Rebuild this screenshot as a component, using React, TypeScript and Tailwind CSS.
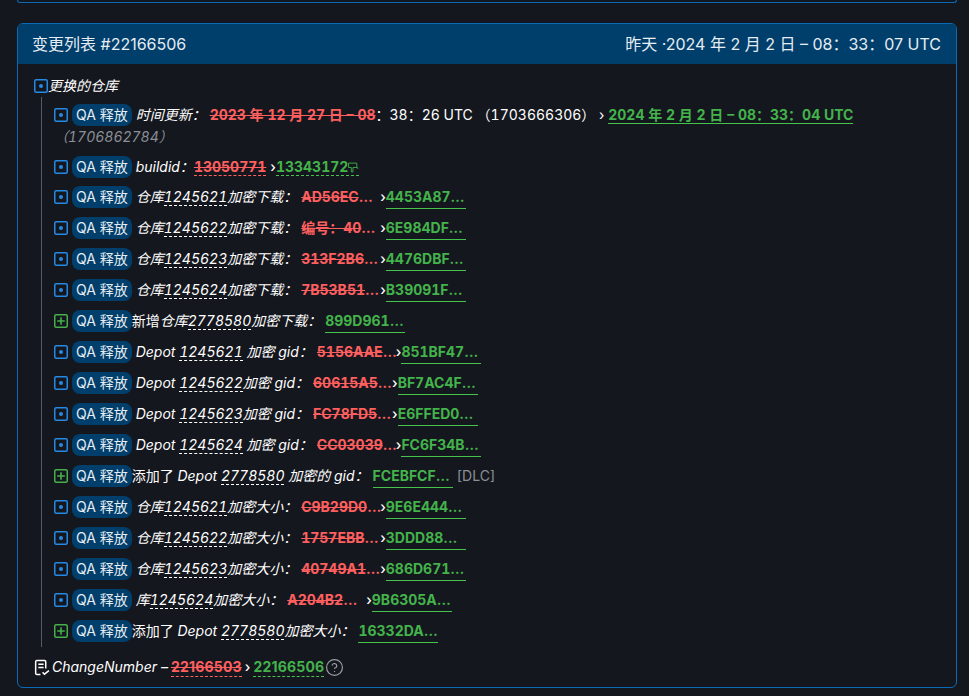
import React from 'react';
import { CircleHelp } from 'lucide-react';

const ChangedIcon = () => (
  <svg viewBox="0 0 14 14" className="inline-block w-[14px] h-[14px] align-[-2px]">
    <rect x="0.75" y="0.75" width="12.5" height="12.5" rx="1.5" fill="none" stroke="#2589e6" strokeWidth="1.5" />
    <circle cx="7" cy="7" r="2" fill="#2589e6" />
  </svg>
);

const AddedIcon = () => (
  <svg viewBox="0 0 14 14" className="inline-block w-[14px] h-[14px] align-[-2px]">
    <rect x="0.75" y="0.75" width="12.5" height="12.5" rx="1.5" fill="none" stroke="#46b04a" strokeWidth="1.5" />
    <path d="M7 3.2v7.6M3.2 7h7.6" fill="none" stroke="#46b04a" strokeWidth="1.6" />
  </svg>
);

const Badge = () => (
  <span className="inline-block h-[22px] px-[4px] ml-[4px] rounded-lg bg-[#003e6b] text-[#e6edf3] align-top">QA 释放</span>
);

const Id = ({ children }: { children: React.ReactNode }) => (
  <span className="border-b border-dashed border-white">{children}</span>
);

const OldCut = ({ children }: { children: React.ReactNode }) => (
  <span className="inline-block w-[81px] -mr-[2px] ml-[4px] h-[23px] align-top truncate font-bold line-through text-[#ff5f5f]">{children}</span>
);

const NewCut = ({ children }: { children: React.ReactNode }) => (
  <span className="inline-block w-20 h-[23px] align-top truncate font-bold text-[#43b34b] border-b border-[#46c34a]">{children}</span>
);

type Item = { added?: boolean; label: React.ReactNode; from?: string; to: string; extra?: string };

const Row = ({ added, label, from, to, extra }: Item) => (
  <div className="mb-2 last:mb-0 leading-[22px]">
    {added ? <AddedIcon /> : <ChangedIcon />}
    <Badge />
    {label}
    {from ? <OldCut>{from}</OldCut> : <span className="inline-block w-1" />}
    {from && <span className="font-medium">›</span>}
    <NewCut>{to}</NewCut>
    {extra && <span className="ml-[4px] text-[#8b8f96]">{extra}</span>}
  </div>
);

const download = (id: string) => (
  <i className="ml-[4px]">仓库<Id>{id}</Id>加密下载：</i>
);
const size = (id: string) => (
  <i className="ml-[4px]">仓库<Id>{id}</Id>加密大小：</i>
);

const items: Item[] = [
  { label: download('1245621'), from: 'AD56EC编号', to: '4453A87C1E20' },
  { label: download('1245622'), from: '编号：40A1C29', to: '6E984DF02B7C' },
  { label: download('1245623'), from: '313F2B6D90E4', to: '4476DBF1A3C8' },
  { label: download('1245624'), from: '7B53B51C07FA', to: 'B39091F6D2E4' },
  {
    added: true,
    label: <span>新增<i>仓库<Id>2778580</Id>加密下载：</i></span>,
    to: '899D961E40AB',
  },
  { label: <i className="ml-[4px]">Depot <Id>1245621</Id> 加密 gid：</i>, from: '5156AAE07C31', to: '851BF47A09D2' },
  { label: <i className="ml-[4px]">Depot <Id>1245622</Id>加密 gid：</i>, from: '60615A5F2E08', to: 'BF7AC4F31D96' },
  { label: <i className="ml-[4px]">Depot <Id>1245623</Id>加密 gid：</i>, from: 'FC78FD5A10B3', to: 'E6FFED0C82A1' },
  { label: <i className="ml-[4px]">Depot <Id>1245624</Id> 加密 gid：</i>, from: 'CC03039E71D5', to: 'FC6F34B9A0C2' },
  {
    added: true,
    label: <span>添加了 <i>Depot <Id>2778580</Id> 加密的 gid：</i></span>,
    to: 'FCEBFCF7163A',
    extra: '[DLC]',
  },
  { label: size('1245621'), from: 'C9B29D07A4E1', to: '9E6E4441BC07' },
  { label: size('1245622'), from: '1757EBB9C203', to: '3DDD88编号' },
  { label: size('1245623'), from: '40749A1D6F5C', to: '686D6712E09B' },
  { label: <i className="ml-[4px]">库<Id>1245624</Id>加密大小：</i>, from: 'A204B2编号', to: '9B6305A1F7D4' },
  {
    added: true,
    label: <span>添加了 <i>Depot <Id>2778580</Id>加密大小：</i></span>,
    to: '16332DA09E7B',
  },
];

export default function App() {
  return (
    <div
      className="min-h-screen bg-[#15171e] pl-[17px] pr-[12px] text-[14px] text-white overflow-hidden"
      style={{ fontFamily: 'Inter, "Noto Sans CJK SC", sans-serif' }}
    >
      <div className="h-[3px] rounded-b-md border-x border-b border-[#0a6ab5]" />

      <div className="mt-5 rounded-md border border-[#0a6ab5] overflow-hidden">
        <div className="flex items-center justify-between h-[40px] pl-[14px] pr-[15px] bg-[#003e6b] text-[16px] text-[#e6edf3]">
          <span>变更列表 #22166506</span>
          <span>昨天 ·2024 年 2 月 2 日 – 08：33：07 UTC</span>
        </div>

        <div className="px-4 pt-[11px] pb-[9px] tabular-nums">
          <div className="leading-[22px]">
            <ChangedIcon />
            <i>更换的仓库</i>
          </div>

          <div className="ml-[7px] pl-3 pt-[7px] pb-[4px] border-l border-[#555b66]">
            <div className="mb-2 leading-[22px]">
              <ChangedIcon />
              <Badge />
              <i className="ml-[4px] mr-[4px]">时间更新：</i>
              <span className="font-bold line-through text-[#ff5f5f]">2023 年 12 月 27 日 – 08</span>
              <span>：38：26 UTC （1703666306） › </span>
              <span className="font-bold text-[#43b34b] border-b border-[#46c34a]">2024 年 2 月 2 日 – 08：33：04 UTC</span>{' '}
              <i className="text-[#8b8f96]">（1706862784）</i>
            </div>

            <div className="mb-2 leading-[22px]">
              <ChangedIcon />
              <Badge />
              <i className="ml-[4px]">buildid：</i>
              <span className="font-bold line-through text-[#ff5f5f] border-b border-dashed border-[#ff5f5f]">13050771</span>
              <span className="ml-1 font-medium">›</span>
              <span className="font-bold text-[#43b34b] border-b border-dashed border-[#46c34a]">
                13343172
                <svg viewBox="0 0 10 10" className="inline-block w-[11px] h-[11px] align-[-1px]">
                  <path d="M.5 1h7.5v4.5h1.5M.5 1v4h2.5v4h1.5V5h3.5" fill="none" stroke="#43b34b" strokeWidth="0.8" />
                </svg>
              </span>
            </div>

            {items.map((item, i) => (
              <Row key={i} {...item} />
            ))}
          </div>

          <div className="mt-[9px] leading-[22px] flex items-center normal-nums">
            <svg viewBox="0 0 16 16" className="w-[17px] h-[17px] mr-[2px] -ml-px" fill="none" stroke="#fff" strokeWidth="1.4">
              <path d="M7 14.5H3.5a1 1 0 0 1-1-1v-11a1 1 0 0 1 1-1h7.5a1 1 0 0 1 1 1V9M5 5h5M5 8h5M9 12.5l1.8 1.8L15 11" />
            </svg>
            <i className="-mr-px">ChangeNumber –&nbsp;</i>
            <span className="font-bold line-through text-[#ff5f5f] border-b border-dashed border-[#ff5f5f] leading-[18px] tracking-[0.2px]">22166503</span>
            <span className="mx-[3px] font-medium">›</span>
            <span className="font-bold text-[#43b34b] border-b border-dashed border-[#46c34a] leading-[18px] tracking-[0.2px]">22166506</span>
            <CircleHelp className="ml-[1px] w-[19px] h-[19px] text-[#9a9da3]" strokeWidth={1.5} />
          </div>
        </div>
      </div>
    </div>
  );
}
